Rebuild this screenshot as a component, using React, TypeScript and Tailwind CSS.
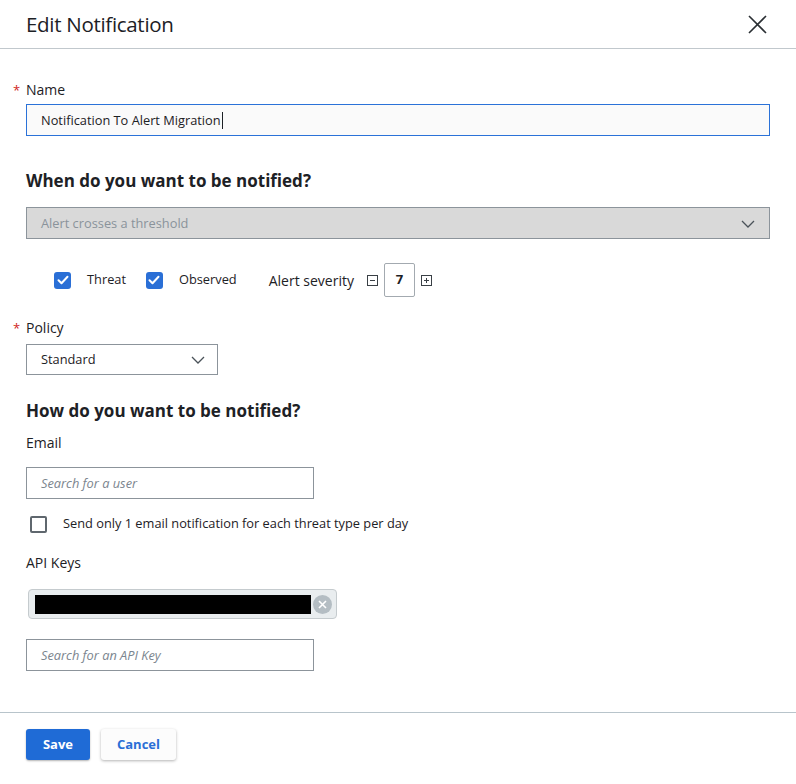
import React from 'react';

const font = { fontFamily: '"Open Sans", "Noto Sans", sans-serif' };

const Chevron = () => (
  <svg width="14" height="8" viewBox="0 0 14 8" fill="none" className="text-[#4a5259]">
    <path d="M1 1l6 6 6-6" stroke="currentColor" strokeWidth="1.3" />
  </svg>
);

const Checked = () => (
  <span className="flex h-[17px] w-[17px] items-center justify-center rounded-[3px] bg-[#2a6fd6]">
    <svg width="12" height="10" viewBox="0 0 12 10" fill="none">
      <path d="M1.5 5.2l3 3L10.5 1.8" stroke="white" strokeWidth="2" strokeLinecap="round" strokeLinejoin="round" />
    </svg>
  </span>
);

const Required: React.FC<{ label: string }> = ({ label }) => (
  <div className="-ml-[15px] flex h-[20px] items-center text-[14px] text-[#1d2125]">
    <span className="w-[15px] pl-[2px] pt-[3px] text-[13px] text-[#d0241c]">*</span>
    <span>{label}</span>
  </div>
);

export default function App() {
  return (
    <div className="h-[784px] w-[796px] bg-white" style={font}>
      <div className="flex h-[49px] items-center justify-between border-b border-[#c1c8cd] pl-[26px] pr-[29px]">
        <h1 className="text-[20.5px] font-normal tracking-[-0.3px] text-[#1d2125]">Edit Notification</h1>
        <svg width="19" height="19" viewBox="0 0 19 19" fill="none">
          <path d="M1 1l17 17M18 1L1 18" stroke="#2a2f33" strokeWidth="1.6" />
        </svg>
      </div>

      <div className="px-[26px]">
        <div className="pt-[30px]">
          <Required label="Name" />
        </div>
        <div className="mt-[5px] flex h-[32px] items-center border border-[#2b72d8] bg-[#fafafa] pl-[14px] pt-[1px] text-[12.8px] text-[#1d2125]">
          Notification To Alert Migration
          <span className="ml-[1px] h-[17px] w-px bg-[#1d2125]" />
        </div>

        <h2 className="mt-[33px] h-[24px] text-[17px] font-bold leading-[24px] text-[#1d2125]">When do you want to be notified?</h2>
        <div className="mt-[14px] flex h-[32px] items-center justify-between border border-[#8c949b] bg-[#d9d9d9] pl-[14px] pr-[14px] pt-[1px] text-[12.8px] text-[#8a939b]">
          <span>Alert crosses a threshold</span>
          <Chevron />
        </div>

        <div className="mt-[24px] flex h-[34px] items-center pl-[28px] text-[12.8px] text-[#1d2125]">
          <Checked />
          <span className="ml-[16px]">Threat</span>
          <span className="ml-[20px]"><Checked /></span>
          <span className="ml-[16px]">Observed</span>
          <span className="ml-[32px] text-[14px]">Alert severity</span>
          <span className="ml-[13px] flex h-[11px] w-[11px] items-center justify-center border border-[#3a4046]">
            <span className="h-px w-[5px] bg-[#3a4046]" />
          </span>
          <span className="ml-[6px] flex h-[34px] w-[31px] items-center justify-center rounded-[2px] border border-[#a3aab0] text-[13px] font-bold">7</span>
          <span className="relative ml-[6px] flex h-[11px] w-[11px] items-center justify-center border border-[#3a4046]">
            <span className="absolute h-px w-[5px] bg-[#3a4046]" />
            <span className="absolute h-[5px] w-px bg-[#3a4046]" />
          </span>
        </div>

        <div className="mt-[20px]">
          <Required label="Policy" />
        </div>
        <div className="mt-[7px] flex h-[31px] w-[192px] items-center justify-between border border-[#8c949b] pl-[14px] pr-[12px] pt-[1px] text-[12.8px] text-[#1d2125]">
          <span>Standard</span>
          <Chevron />
        </div>

        <h2 className="mt-[24px] h-[24px] text-[17px] font-bold leading-[24px] text-[#1d2125]">How do you want to be notified?</h2>
        <div className="mt-[10px] h-[20px] text-[14px] leading-[20px] text-[#1d2125]">Email</div>
        <div className="mt-[14px] flex h-[32px] w-[288px] items-center border border-[#8c949b] pl-[14px] pt-[2px] text-[12.8px] italic text-[#7b858e]">
          Search for a user
        </div>

        <div className="mt-[15px] flex h-[20px] items-center text-[12.8px] text-[#1d2125]">
          <span className="ml-[4px] h-[17px] w-[17px] rounded-[2px] border-2 border-[#5f676e]" />
          <span className="ml-[16px]">Send only 1 email notification for each threat type per day</span>
        </div>

        <div className="mt-[19px] h-[20px] text-[14px] leading-[20px] text-[#1d2125]">API Keys</div>
        <div className="ml-[2px] mt-[16px] flex h-[30px] w-[309px] items-center rounded-[4px] border border-[#c5cbce] bg-[#e9edef] pl-[6px]">
          <span className="h-[19px] w-[276px] bg-black" />
          <span className="ml-[2px] flex h-[19px] w-[19px] items-center justify-center rounded-full bg-[#b4bdc3]">
            <svg width="9" height="9" viewBox="0 0 9 9">
              <path d="M1 1l7 7M8 1L1 8" stroke="white" strokeWidth="1.6" />
            </svg>
          </span>
        </div>
        <div className="mt-[20px] flex h-[32px] w-[288px] items-center border border-[#8c949b] pl-[14px] pt-[2px] text-[12.8px] italic text-[#7b858e]">
          Search for an API Key
        </div>
      </div>

      <div className="mt-[41px] flex gap-[11px] border-t border-[#b8c4cb] px-[26px] pt-[16px]">
        <button className="h-[31px] w-[64px] rounded-[3px] bg-[#1f6bd6] text-[13px] font-bold text-white shadow-[0_1px_2px_rgba(0,0,0,0.3)]">Save</button>
        <button className="h-[31px] w-[75px] rounded-[3px] bg-[#fcfcfc] text-[13px] font-bold text-[#2a6fd6] shadow-[0_1px_3px_rgba(0,0,0,0.3)]">Cancel</button>
      </div>
    </div>
  );
}
